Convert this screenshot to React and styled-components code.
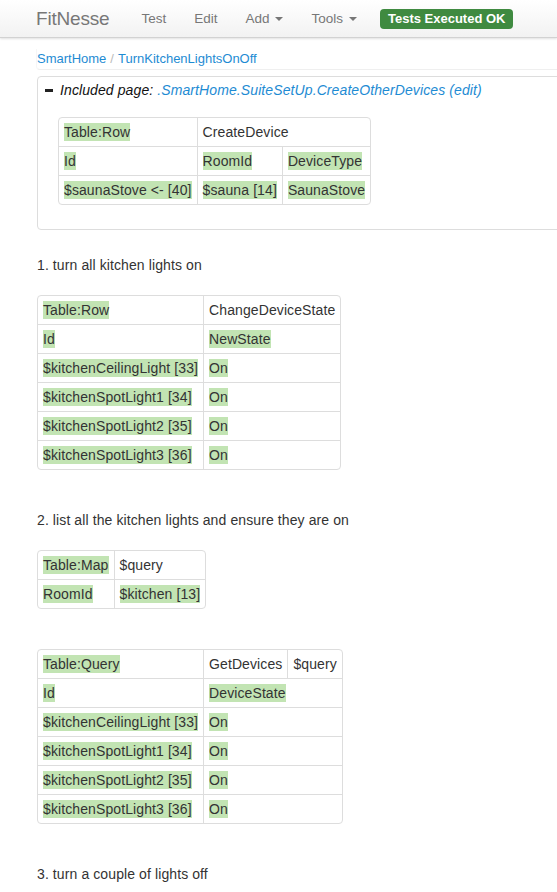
import React from "react";
import styled, { createGlobalStyle } from "styled-components";

const GlobalStyle = createGlobalStyle`
  html, body {
    margin: 0;
    padding: 0;
    background: #fff;
    overflow: hidden;
  }
  body {
    font-family: "Liberation Sans", Arial, sans-serif;
    font-size: 14px;
    line-height: 20px;
    color: #333;
  }
`;

const Page = styled.div`
  width: 557px;
  min-height: 892px;
  overflow: hidden;
`;

const NavBar = styled.header`
  height: 37px;
  display: flex;
  align-items: center;
  padding-left: 36px;
  background: linear-gradient(to bottom, #ffffff 0%, #f2f2f2 100%);
  border-bottom: 1px solid #d2d2d2;
  box-shadow: 0 1px 2px rgba(0, 0, 0, 0.12);
`;

const Brand = styled.span`
  font-size: 19px;
  color: #777;
  margin-right: 18px;
  letter-spacing: -0.2px;
`;

const NavItem = styled.span`
  font-size: 13.5px;
  color: #777;
  padding: 0 14px;
  display: inline-flex;
  align-items: center;
  gap: 5px;
`;

const Caret = styled.span`
  display: inline-block;
  width: 0;
  height: 0;
  border-left: 4px solid transparent;
  border-right: 4px solid transparent;
  border-top: 4px solid #777;
  margin-left: 1px;
  margin-top: 1px;
`;

const Badge = styled.span`
  margin-left: 9px;
  height: 20px;
  padding: 0 8px;
  display: inline-flex;
  align-items: center;
  background: #3f8a40;
  color: #fff;
  font-weight: bold;
  font-size: 13px;
  border-radius: 4px;
`;

const Main = styled.main`
  padding-left: 37px;
  width: 800px;
`;

const Breadcrumb = styled.div`
  margin-top: 11px;
  line-height: 20px;
  font-size: 13px;
  padding-bottom: 0;
  border-bottom: 1px solid #efefef;
  border-left: 1px solid #f6f6f6;
  border-bottom-left-radius: 4px;
  margin-left: -1px;
`;

const Crumb = styled.a`
  color: #1e8bd3;
  text-decoration: none;
`;

const Sep = styled.span`
  color: #bbb;
  padding: 0 4px;
`;

const IncludeBox = styled.section`
  margin-top: 6px;
  border: 1px solid #ddd;
  border-radius: 4px;
  padding: 3px 0 24px 0;
`;

const IncludeHeader = styled.div`
  display: flex;
  align-items: center;
  padding-left: 7px;
  font-style: italic;
  color: #111;
  line-height: 20px;
  letter-spacing: 0.1px;
`;

const Minus = styled.span`
  display: inline-block;
  width: 8px;
  height: 3px;
  background: #222;
  margin-right: 7px;
`;

const Link = styled.a`
  color: #1e8bd3;
  text-decoration: none;
  margin-left: 4px;
`;

const IncludeBody = styled.div`
  padding: 17px 0 0 20px;
`;

const Para = styled.p`
  margin: ${(p) => p.$top}px 0 20px 0;
  line-height: 20px;
  letter-spacing: 0.1px;
`;

const Table = styled.table`
  border-collapse: separate;
  border-spacing: 0;
  border: 1px solid #ddd;
  border-radius: 4px;
  margin-bottom: ${(p) => p.$bottom || 0}px;
`;

const Cell = styled.td`
  padding: 4px 5px;
  line-height: 20px;
  font-size: 14px;
  letter-spacing: 0.1px;
  white-space: nowrap;
  text-align: left;
  vertical-align: top;
  border-left: ${(p) => (p.$first ? "none" : "1px solid #ddd")};
  border-top: ${(p) => (p.$topRow ? "none" : "1px solid #ddd")};
`;

const Pass = styled.span`
  background: #c2e4b3;
  padding: 1px 0;
`;

const Plain = styled.span``;

function FitTable({ rows, bottom }) {
  return (
    <Table $bottom={bottom}>
      <tbody>
        {rows.map((row, ri) => (
          <tr key={ri}>
            {row.map((c, ci) => (
              <Cell
                key={ci}
                colSpan={c.span || 1}
                $first={ci === 0}
                $topRow={ri === 0}
              >
                {c.pass ? <Pass>{c.t}</Pass> : <Plain>{c.t}</Plain>}
              </Cell>
            ))}
          </tr>
        ))}
      </tbody>
    </Table>
  );
}

const P = (t, span) => ({ t, pass: true, span });
const N = (t, span) => ({ t, pass: false, span });

const createDevice = [
  [P("Table:Row"), N("CreateDevice", 2)],
  [P("Id"), P("RoomId"), P("DeviceType")],
  [P("$saunaStove <- [40]"), P("$sauna [14]"), P("SaunaStove")],
];

const changeState = [
  [P("Table:Row"), N("ChangeDeviceState")],
  [P("Id"), P("NewState")],
  [P("$kitchenCeilingLight [33]"), P("On")],
  [P("$kitchenSpotLight1 [34]"), P("On")],
  [P("$kitchenSpotLight2 [35]"), P("On")],
  [P("$kitchenSpotLight3 [36]"), P("On")],
];

const mapTable = [
  [P("Table:Map"), N("$query")],
  [P("RoomId"), P("$kitchen [13]")],
];

const queryTable = [
  [P("Table:Query"), N("GetDevices"), N("$query")],
  [P("Id"), P("DeviceState", 2)],
  [P("$kitchenCeilingLight [33]"), P("On", 2)],
  [P("$kitchenSpotLight1 [34]"), P("On", 2)],
  [P("$kitchenSpotLight2 [35]"), P("On", 2)],
  [P("$kitchenSpotLight3 [36]"), P("On", 2)],
];

export default function App() {
  return (
    <Page>
      <GlobalStyle />
      <NavBar>
        <Brand>FitNesse</Brand>
        <NavItem>Test</NavItem>
        <NavItem>Edit</NavItem>
        <NavItem>
          Add <Caret />
        </NavItem>
        <NavItem>
          Tools <Caret />
        </NavItem>
        <Badge>Tests Executed OK</Badge>
      </NavBar>
      <Main>
        <Breadcrumb>
          <Crumb>SmartHome</Crumb>
          <Sep>/</Sep>
          <Crumb>TurnKitchenLightsOnOff</Crumb>
        </Breadcrumb>
        <IncludeBox>
          <IncludeHeader>
            <Minus />
            Included page:
            <Link>.SmartHome.SuiteSetUp.CreateOtherDevices (edit)</Link>
          </IncludeHeader>
          <IncludeBody>
            <FitTable rows={createDevice} />
          </IncludeBody>
        </IncludeBox>
        <Para $top={25}>1. turn all kitchen lights on</Para>
        <FitTable rows={changeState} />
        <Para $top={40}>2. list all the kitchen lights and ensure they are on</Para>
        <FitTable rows={mapTable} bottom={40} />
        <FitTable rows={queryTable} />
        <Para $top={40}>3. turn a couple of lights off</Para>
      </Main>
    </Page>
  );
}
